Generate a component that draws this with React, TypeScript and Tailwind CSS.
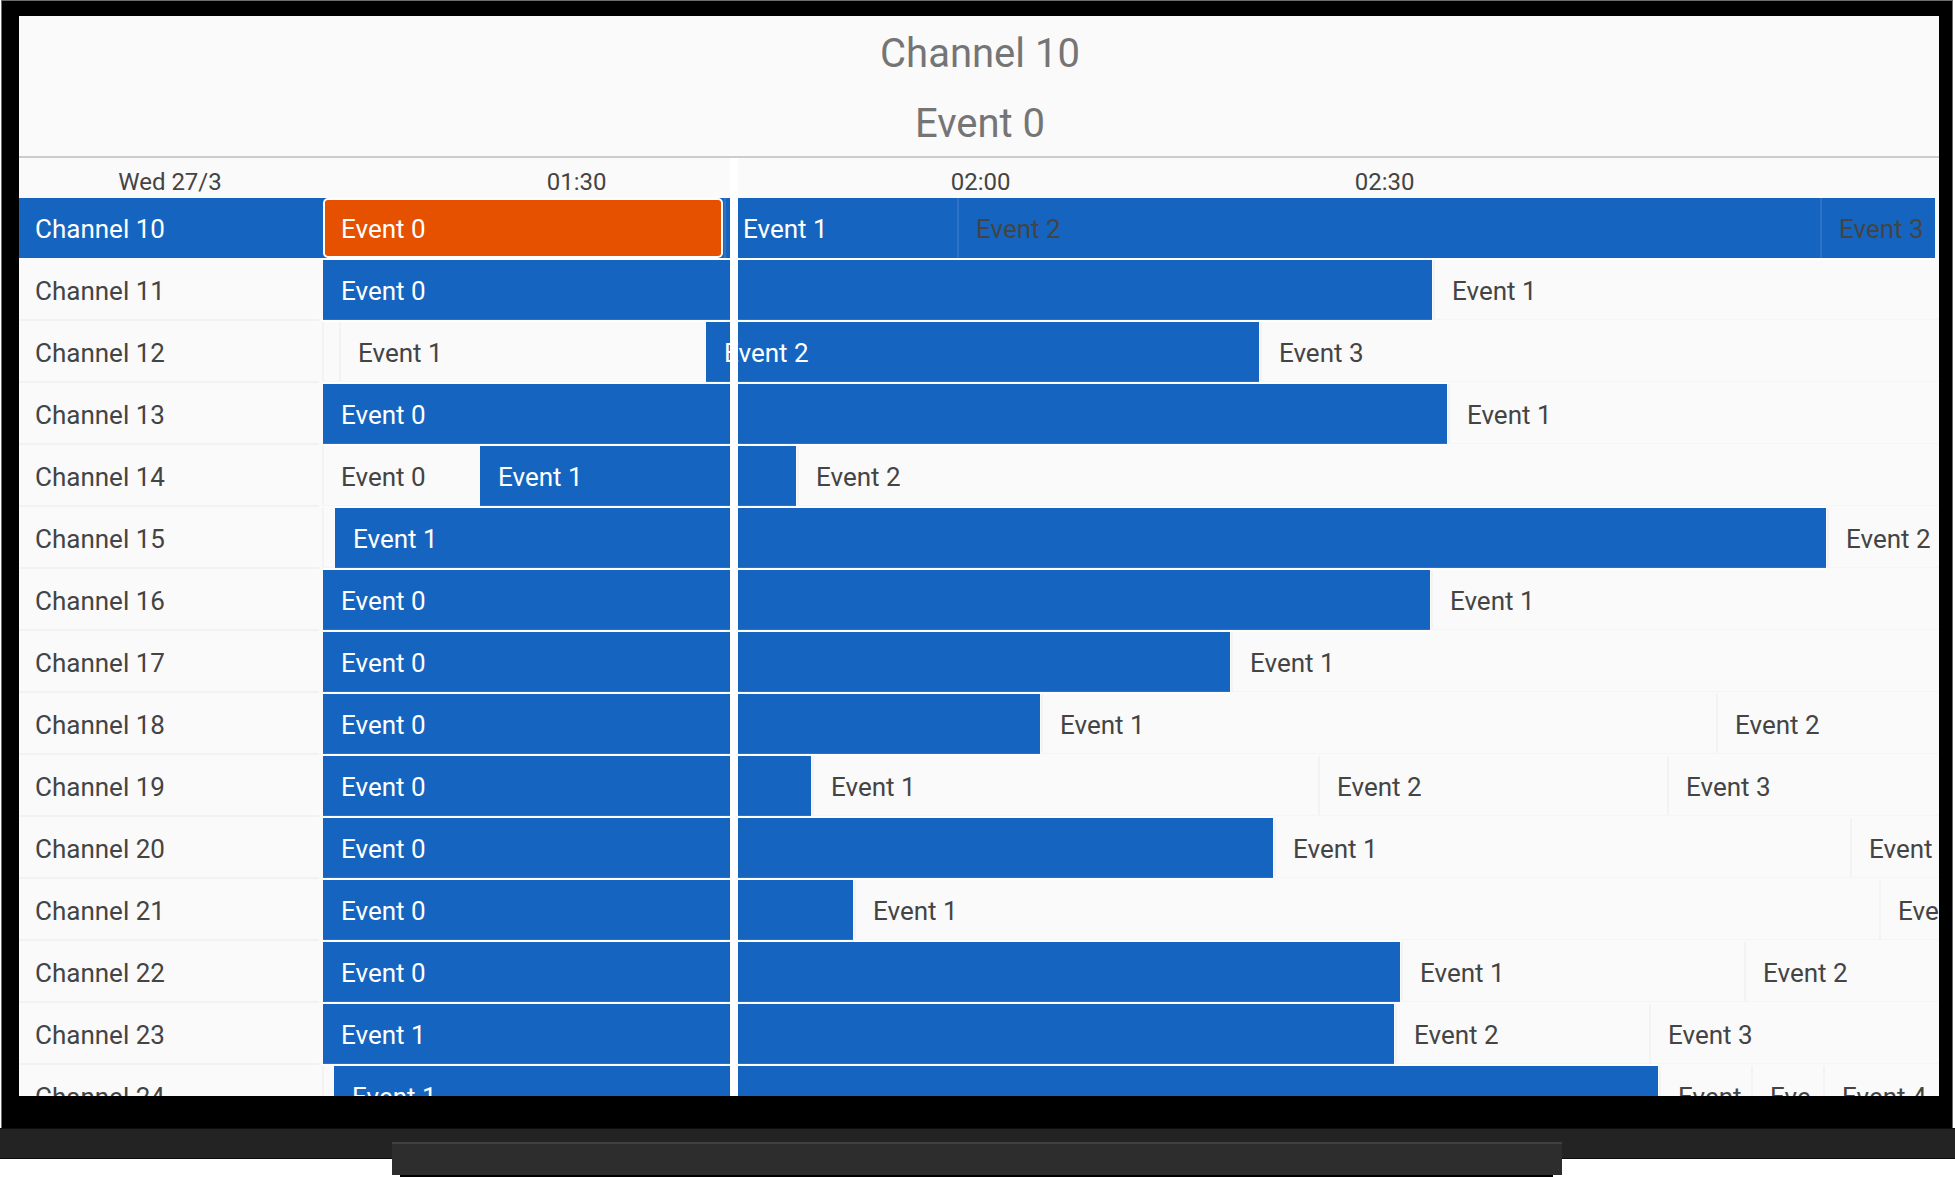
import React from "react";

type Kind = "plain" | "live" | "focused" | "rowLive" | "rowPlain";
type Item = { from: number; label: string; kind?: Kind };
type Row = { channel: string; items: Item[]; until?: number };

// Timeline positions are expressed in units from START to END.
const START = 322;
const END = 1939;
const SPAN = END - START;

const rows: Row[] = [
  {
    channel: "Channel 10",
    until: 1935,
    items: [
      { from: 322, label: "Event 0", kind: "focused" },
      { from: 724, label: "Event 1", kind: "rowLive" },
      { from: 957, label: "Event 2", kind: "rowPlain" },
      { from: 1820, label: "Event 3", kind: "rowPlain" },
    ],
  },
  { channel: "Channel 11", items: [{ from: 322, label: "Event 0", kind: "live" }, { from: 1433, label: "Event 1" }] },
  {
    channel: "Channel 12",
    items: [
      { from: 322, label: "" },
      { from: 339, label: "Event 1" },
      { from: 705, label: "Event 2", kind: "live" },
      { from: 1260, label: "Event 3" },
    ],
  },
  { channel: "Channel 13", items: [{ from: 322, label: "Event 0", kind: "live" }, { from: 1448, label: "Event 1" }] },
  {
    channel: "Channel 14",
    items: [{ from: 322, label: "Event 0" }, { from: 479, label: "Event 1", kind: "live" }, { from: 797, label: "Event 2" }],
  },
  {
    channel: "Channel 15",
    items: [{ from: 322, label: "" }, { from: 334, label: "Event 1", kind: "live" }, { from: 1827, label: "Event 2" }],
  },
  { channel: "Channel 16", items: [{ from: 322, label: "Event 0", kind: "live" }, { from: 1431, label: "Event 1" }] },
  { channel: "Channel 17", items: [{ from: 322, label: "Event 0", kind: "live" }, { from: 1231, label: "Event 1" }] },
  {
    channel: "Channel 18",
    items: [{ from: 322, label: "Event 0", kind: "live" }, { from: 1041, label: "Event 1" }, { from: 1716, label: "Event 2" }],
  },
  {
    channel: "Channel 19",
    items: [
      { from: 322, label: "Event 0", kind: "live" },
      { from: 812, label: "Event 1" },
      { from: 1318, label: "Event 2" },
      { from: 1667, label: "Event 3" },
    ],
  },
  {
    channel: "Channel 20",
    items: [{ from: 322, label: "Event 0", kind: "live" }, { from: 1274, label: "Event 1" }, { from: 1850, label: "Event" }],
  },
  {
    channel: "Channel 21",
    items: [{ from: 322, label: "Event 0", kind: "live" }, { from: 854, label: "Event 1" }, { from: 1879, label: "Eve" }],
  },
  {
    channel: "Channel 22",
    items: [{ from: 322, label: "Event 0", kind: "live" }, { from: 1401, label: "Event 1" }, { from: 1744, label: "Event 2" }],
  },
  {
    channel: "Channel 23",
    items: [{ from: 322, label: "Event 1", kind: "live" }, { from: 1395, label: "Event 2" }, { from: 1649, label: "Event 3" }],
  },
  {
    channel: "Channel 24",
    items: [
      { from: 322, label: "" },
      { from: 333, label: "Event 1", kind: "live" },
      { from: 1659, label: "Event" },
      { from: 1751, label: "Eve" },
      { from: 1823, label: "Event 4" },
    ],
  },
];

const kinds: Record<Kind, string> = {
  plain: "pt-[3px] pl-[19px] border-b border-b-[#f5f5f5] shadow-[inset_2px_0_0_#f3f3f3] text-[#444444]",
  live: "pt-[3px] mx-px pl-[18px] bg-[#1565c0] border-b border-b-[#2a72c5] shadow-[0_-2px_0_#ffffff,0_2px_0_#ffffff] text-white",
  focused: "pt-[2px] mx-px pl-4 bg-[#e65100] border-2 border-white rounded-[5px] text-white",
  rowLive: "pt-[2px] pl-[19px] shadow-[inset_2px_0_0_#2f72c5] text-white",
  rowPlain: "pt-[2px] pl-[19px] shadow-[inset_2px_0_0_#2f72c5] text-[#444444]",
};

function EventCell({ item, to }: { item: Item; to: number }) {
  return (
    <div className="h-[60px] min-w-0 shrink-0" style={{ width: `${((to - item.from) / SPAN) * 100}%` }}>
      <button
        type="button"
        aria-label={item.label || "Earlier event"}
        className={`flex h-full items-center overflow-hidden whitespace-nowrap text-left ${
          item.kind === "live" || item.kind === "focused" ? "w-[calc(100%-2px)]" : "w-full"
        } ${kinds[item.kind ?? "plain"]}`}
      >
        {item.label}
      </button>
    </div>
  );
}

function GuideRow({ row, selected }: { row: Row; selected: boolean }) {
  return (
    <div className="flex h-[62px] shrink-0">
      {selected ? (
        <div className="flex h-[60px] w-[303px] shrink-0 items-center bg-[#1565c0] pt-[2px] pl-4 text-white">{row.channel}</div>
      ) : (
        <div className="mr-[3px] flex h-[61px] w-[300px] shrink-0 items-center border-b-2 border-[#f2f2f2] pt-[3px] pl-4">
          {row.channel}
        </div>
      )}
      <div
        className={
          selected
            ? "mr-1 h-[60px] flex-1 bg-[#1565c0] shadow-[0_2px_0_#ffffff]"
            : "h-[60px] min-w-0 flex-1"
        }
      >
        <div className={selected ? "-mr-1 flex" : "flex"}>
          {row.items.map((item, i) => (
            <EventCell key={i} item={item} to={row.items[i + 1]?.from ?? row.until ?? END} />
          ))}
        </div>
      </div>
    </div>
  );
}

export default function App() {
  return (
    <div className="flex h-screen flex-col overflow-hidden bg-white font-[Roboto,sans-serif] text-[26px] leading-8 text-[#444444]">
      <div className="mr-[2px] ml-px flex min-h-0 flex-1 flex-col border-x border-t border-[#6b6f6c] bg-black pt-[15px] pr-[13px] pb-8 pl-[17px]">
        <main className="flex min-h-0 flex-1 flex-col overflow-hidden bg-[#fafafa]">
          <header className="h-[142px] shrink-0 border-b-2 border-[#cccccc] pt-[3px] pl-[2px] text-center text-[40px] leading-[70px] text-[#757575]">
            <h1>Channel 10</h1>
            <h2>Event 0</h2>
          </header>
          <section className="relative flex min-h-0 flex-1 flex-col overflow-hidden" aria-label="Programme guide">
            <div className="flex h-10 shrink-0 pt-2 text-center text-2xl">
              <div className="w-[300px] shrink-0 pl-[2px]">Wed 27/3</div>
              <div className="ml-[3px] flex flex-1 pl-px">
                <div className="w-[3.2%] shrink-0" />
                <div className="w-1/4 shrink-0">01:30</div>
                <div className="w-1/4 shrink-0">02:00</div>
                <div className="w-1/4 shrink-0">02:30</div>
              </div>
            </div>
            {rows.map((row, i) => (
              <GuideRow key={row.channel} row={row} selected={i === 0} />
            ))}
            <div className="pointer-events-none absolute inset-y-0 right-0 left-[303px]">
              <div className="ml-[25.23%] h-full w-2 bg-white" />
            </div>
          </section>
        </main>
      </div>
      <div className="h-[31px] shrink-0 border-y border-t-[#0c0c0c] border-b-[#0c0c0c] bg-[#232323]" />
      <div className="z-10 -mt-[17px] mr-[20.1%] ml-[20.05%] shrink-0">
        <div className="h-[33px] border-t-2 border-[#404040] bg-[#2d2d2d]" />
        <div className="mr-[9px] ml-2 h-[2px] bg-black" />
      </div>
    </div>
  );
}
